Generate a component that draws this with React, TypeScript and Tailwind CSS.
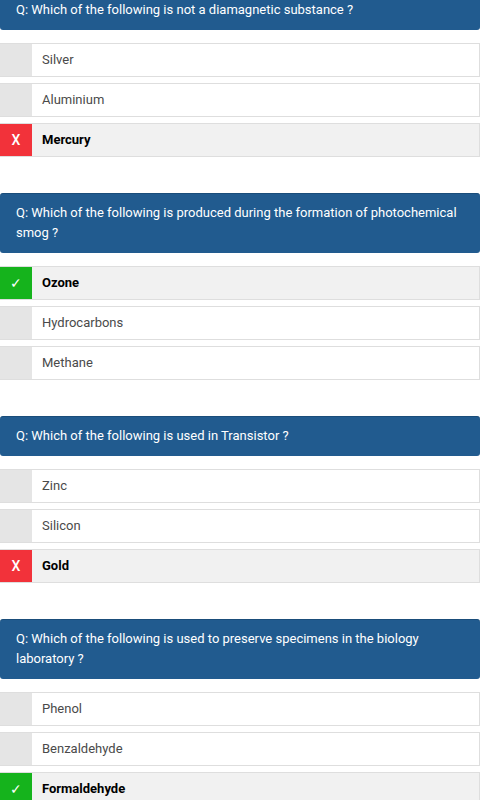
const questions = [
  {
    q: "Q: Which of the following is not a diamagnetic substance ?",
    options: ["Silver", "Aluminium", "Mercury"],
    picked: 2,
    correct: false,
  },
  {
    q: "Q: Which of the following is produced during the formation of photochemical smog ?",
    options: ["Ozone", "Hydrocarbons", "Methane"],
    picked: 0,
    correct: true,
  },
  {
    q: "Q: Which of the following is used in Transistor ?",
    options: ["Zinc", "Silicon", "Gold"],
    picked: 2,
    correct: false,
  },
  {
    q: "Q: Which of the following is used to preserve specimens in the biology laboratory ?",
    options: ["Phenol", "Benzaldehyde", "Formaldehyde"],
    picked: 2,
    correct: true,
  },
];

function Option({ text, picked, correct }: { text: string; picked: boolean; correct: boolean }) {
  const mark = picked ? (correct ? "✓" : "X") : "";
  const markBg = picked ? (correct ? "bg-[#15b31c]" : "bg-[#f2323a]") : "bg-[#e5e5e5]";
  return (
    <div
      className={`flex h-[34px] items-stretch border border-l-0 border-[#dedede] ${
        picked ? "bg-[#f1f1f1]" : "bg-white"
      }`}
    >
      <div
        className={`flex w-[32px] shrink-0 items-center justify-center text-[14px] font-medium text-white ${markBg}`}
      >
        {mark}
      </div>
      <div
        className={`flex items-center pl-[10px] text-[13px] ${
          picked ? "font-bold text-black" : "text-[#4a4a4a]"
        }`}
      >
        {text}
      </div>
    </div>
  );
}

export default function App() {
  return (
    <div className="h-[800px] overflow-hidden bg-white font-['Roboto',sans-serif]">
      <div className="-mt-[10px]">
        {questions.map((item, i) => (
          <div key={i} className="pb-[36px]">
            <div className="rounded-[3px] border-t border-[#1a4d7a] bg-[#215b8f] pb-[10px] pl-4 pr-2 pt-[9px] text-[13px] leading-[20px] text-white">
              {item.q}
            </div>
            <div className="mt-[13px] flex flex-col gap-[6px]">
              {item.options.map((o, j) => (
                <Option key={j} text={o} picked={item.picked === j} correct={item.correct} />
              ))}
            </div>
          </div>
        ))}
      </div>
    </div>
  );
}
